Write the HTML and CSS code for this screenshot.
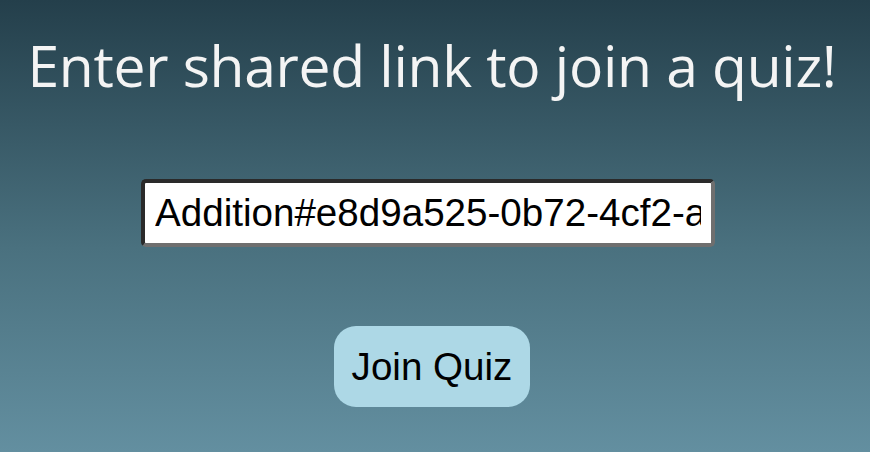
FILE: index.html
```html
<!DOCTYPE html>
<html>
<head>
<meta charset="utf-8">
<link rel="stylesheet" href="styles.css">
</head>
<body>
<main class="page">
  <h1 class="title">Enter shared link to join a quiz!</h1>
  <input class="link-input" type="text" value="Addition#e8d9a525-0b72-4cf2-a5b1-7c3e9d2f1a44">
  <button class="join-btn">Join Quiz</button>
</main>
</body>
</html>
```
FILE: styles.css
```css
html, body {
  margin: 0;
  padding: 0;
  height: 100%;
}
body {
  background: linear-gradient(to bottom, #243f4b 0%, #4a717f 55%, #638fa0 100%);
  overflow: hidden;
}
.page {
  display: flex;
  flex-direction: column;
  align-items: center;
}
.title {
  margin: 27px 6px 0 0;
  font-family: "Open Sans", "Noto Sans", sans-serif;
  font-weight: 400;
  font-size: 57px;
  line-height: 76px;
  color: #f4f4f4;
  letter-spacing: -0.3px;
}
.link-input {
  margin-top: 76px;
  margin-right: 14px;
  width: 574px;
  height: 68px;
  box-sizing: border-box;
  border: 4px solid;
  border-color: #2a2a2a #6f6f6f #6f6f6f #2a2a2a;
  border-radius: 5px;
  padding: 0 10px;
  font-family: "Liberation Sans", Arial, sans-serif;
  font-size: 38.6px;
  color: #000;
  background: #fff;
  outline: none;
}
.join-btn {
  margin-top: 79px;
  margin-right: 6px;
  width: 196px;
  height: 81px;
  border: none;
  border-radius: 22px;
  background: #add8e6;
  font-family: "Liberation Sans", Arial, sans-serif;
  font-size: 38.6px;
  color: #000;
  padding: 0;
}
```
